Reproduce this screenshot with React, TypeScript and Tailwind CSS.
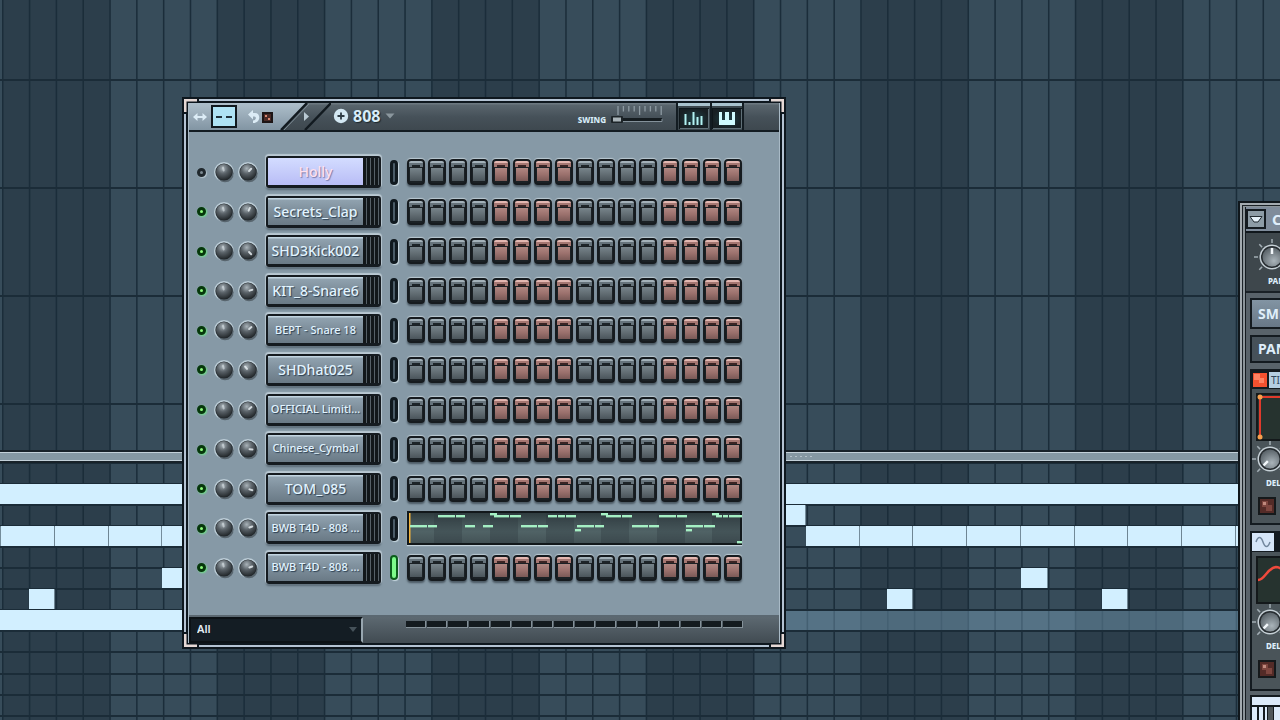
import { useState } from "react";
import clsx from "clsx";

interface Channel {
  name: string;
  muted?: boolean;
  selected?: boolean;
  small?: boolean;
  active?: boolean;
  roll?: boolean;
  vol: number;
}

const CHANNELS: Channel[] = [
  { name: "Holly", muted: true, selected: true, vol: 45 },
  { name: "Secrets_Clap", vol: 25 },
  { name: "SHD3Kick002", vol: 135 },
  { name: "KIT_8-Snare6", vol: 75 },
  { name: "BEPT - Snare 18", small: true, vol: 50 },
  { name: "SHDhat025", vol: -40 },
  { name: "OFFICIAL Limitl...", small: true, vol: 50 },
  { name: "Chinese_Cymbal", small: true, vol: 95 },
  { name: "TOM_085", vol: 105 },
  { name: "BWB T4D - 808 ...", small: true, roll: true, vol: 70 },
  { name: "BWB T4D - 808 ...", small: true, active: true, vol: 70 },
];

// x, y, width inside the mini roll
const ROLL_NOTES = [
  [3, 15, 17], [21, 15, 9], [31, 5, 17], [49, 5, 9], [58, 15, 10], [76, 15, 10],
  [83, 3, 7], [87, 5, 15], [103, 5, 11], [114, 15, 16], [131, 15, 10], [141, 5, 9],
  [151, 5, 7], [159, 5, 10], [170, 15, 17], [188, 15, 9], [168, 19, 6], [194, 3, 7],
  [199, 5, 15], [215, 5, 10], [225, 15, 16], [242, 15, 10], [252, 5, 17], [270, 5, 10],
  [279, 15, 17], [297, 15, 11], [279, 19, 6], [305, 3, 7], [309, 5, 6], [316, 5, 5],
  [322, 5, 13], [330, 31, 5],
];

const BEAT = 26.82;
const ROW = 21.1;
const BEATS = Array.from({ length: 96 }, (_, i) => i);

// x, row, width
const NOTES = [
  [0, 1, 2400],
  [760, 2, 46],
  [-53, 3, 54], [1, 3, 54], [55, 3, 54], [109, 3, 53], [162, 3, 53],
  [806, 3, 54], [860, 3, 53], [913, 3, 54], [967, 3, 54], [1021, 3, 54],
  [1075, 3, 53], [1128, 3, 54], [1182, 3, 54], [1236, 3, 54],
  [162, 5, 27], [1021, 5, 27],
  [29, 6, 26], [887, 6, 26], [1102, 6, 26],
  [0, 7, 300],
];

function Beats() {
  return (
    <>
      <rect width="100%" height="100%" fill="#374c5a" />
      {BEATS.filter((i) => i % 8 === 0).map((i) => (
        <rect key={i} x={3 + i * BEAT} width={4 * BEAT} height="100%" fill="#2c3e4b" />
      ))}
      {BEATS.map((i) => (
        <rect key={i} x={2 + i * BEAT} width="1.5" height="100%" fill="#1b2d3a" />
      ))}
    </>
  );
}

function PianoRoll() {
  return (
    <div className="flex h-full flex-col">
      <svg className="h-[450px] w-full shrink-0" aria-hidden="true">
        <Beats />
        {[79, 187, 295, 403].map((y) => (
          <rect key={y} y={y} width="100%" height="2" fill="#1b2c38" />
        ))}
      </svg>
      <div className="flex h-[13px] shrink-0 items-center border-y-2 border-[#182229] bg-[#8598a3] shadow-[inset_0_1px_0_#c3d0d8,inset_0_-1px_0_#c3d0d8]">
        <svg className="ml-[790px] h-[3px] w-[26px]" aria-hidden="true">
          {[0, 5, 10, 15, 20].map((x) => (
            <rect key={x} x={x} y="1" width="2" height="1" fill="#b4c1c9" />
          ))}
        </svg>
      </div>
      <svg className="min-h-0 w-full flex-1" aria-hidden="true">
        <Beats />
        <rect y={7 * ROW - 1} width="100%" height={ROW} fill="#7ea6c0" fillOpacity="0.42" />
        {BEATS.slice(0, 60).map((i) => (
          <rect key={i} y={Math.floor(i * ROW) - 1} width="100%" height="2" fill="#1b2c38" />
        ))}
        {NOTES.map(([x, row, w], i) => (
          <rect key={i} x={x} y={Math.floor(row * ROW)} width={w - 0.6} height="20" fill="#d2efff" />
        ))}
      </svg>
    </div>
  );
}

function Knob({ label, angle, soft }: { label: string; angle: number; soft?: boolean }) {
  return (
    <label className="relative block size-[18px]">
      <input type="range" aria-label={label} className="absolute inset-0 size-full opacity-0" />
      <svg viewBox="0 0 18 18" className="pointer-events-none relative size-full overflow-visible">
        <circle cx="9" cy="9" r="10" fill="#bccdd7" />
        <circle cx="10" cy="10.5" r="8.8" fill="#58656e" />
        <circle cx="9" cy="9" r="8.6" fill="#22282c" />
        <circle cx="9" cy="9" r="8" fill="url(#knob)" />
        <line
          x1="9"
          y1="7.5"
          x2="9"
          y2="4.5"
          stroke="#e6edf1"
          strokeWidth="2"
          strokeOpacity={soft ? 0.5 : 0.85}
          strokeLinecap="round"
          transform={`rotate(${angle} 9 9)`}
        />
      </svg>
    </label>
  );
}

// face, cap notch and cap are stacked over the dark body of the key
const STEP =
  "h-[26px] w-[18px] appearance-none rounded-[4px] border-2 border-[#161b1f] bg-[#1b2125] bg-no-repeat shadow-[0_-1px_1px_#bccad3,0_2px_2px_#4b5963] bg-size-[12px_13px,8px_2px,14px_6px] bg-position-[1px_7px,3px_4px,0_0]";
const STEP_GREY =
  "bg-[image:linear-gradient(#77848b,#626d73_50%,#4b555b),linear-gradient(#1d2428,#1d2428),linear-gradient(#a3b1b9_0_2px,#66737b_2px)]";
const STEP_RED =
  "bg-[image:linear-gradient(#b08782,#9b716d_50%,#7b5a57),linear-gradient(#3a2424,#3a2424),linear-gradient(#e3b7b1_0_2px,#a57772_2px)]";

function Steps({ name }: { name: string }) {
  return (
    <div className="flex w-[335px] justify-between">
      {Array.from({ length: 16 }, (_, i) => (
        <input
          key={i}
          type="checkbox"
          aria-label={`${name} ${i + 1}`}
          className={clsx(STEP, Math.floor(i / 4) % 2 ? STEP_RED : STEP_GREY)}
        />
      ))}
    </div>
  );
}

function MiniRoll() {
  return (
    <button type="button" aria-label="Piano roll" className="shadow-[0_1px_1px_#c3d2db]">
      <svg viewBox="0 0 335 34" className="h-[34px] w-[335px]">
        <rect width="335" height="34" fill="#4a5a5e" />
        <rect width="335" height="34" fill="url(#roll)" />
        {[27, 83, 139, 194, 250, 305].map((x) => (
          <rect key={x} x={x} width="28" height="34" fill="#2a363a" fillOpacity="0.3" />
        ))}
        <rect x="1" y="1" width="333" height="32" fill="none" stroke="#12181b" strokeWidth="2" />
        <rect x="2" y="2" width="1.5" height="30" fill="#f3b43c" />
        {ROLL_NOTES.map(([x, y, w], i) => (
          <rect key={i} x={x} y={y - 1} width={w} height="2.4" fill="#a5f0c4" />
        ))}
      </svg>
    </button>
  );
}

function ChannelRow({ channel }: { channel: Channel }) {
  const [on, setOn] = useState(!channel.muted);
  return (
    <div className="flex h-[34px] items-center gap-[9px]">
      <input
        type="checkbox"
        checked={on}
        onChange={() => setOn(!on)}
        aria-label={`${channel.name} on`}
        className="size-[9px] appearance-none rounded-full border-[3px] border-[#20282d] bg-[#7d8a92] shadow-[1px_1px_1px_#b5c5cf] checked:border-[#06370b] checked:bg-[#8dfb7c] checked:shadow-[1px_1px_2px_#6fe08a]"
      />
      <div className="flex gap-1.5">
        <Knob label={`${channel.name} pan`} angle={-12} soft />
        <Knob label={`${channel.name} volume`} angle={channel.vol} />
      </div>
      <button
        type="button"
        className="flex h-8 w-[115px] rounded-[3px] border-2 border-b-3 border-[#151b20] bg-[#151b20] shadow-[0_-1px_1px_1px_#b9c8d2,0_2px_2px_#596974]"
      >
        <span
          className={clsx(
            "flex h-full w-[95px] items-center justify-center overflow-hidden font-medium whitespace-nowrap",
            channel.small ? "text-[11px]" : "text-[14px]",
            channel.selected
              ? "bg-[linear-gradient(#d3dcff,#b9bdf6)] text-[#ffe0ee] [text-shadow:1px_1px_1px_#7b7ba8]"
              : "bg-[linear-gradient(#c2d5e1_0_1px,#90a2af_2px,#7f909d_12px,#6a7a86)] text-[#e2f4ff] [text-shadow:1px_1px_1px_#2b3f52]",
          )}
        >
          {channel.name}
        </span>
        <span className="h-full flex-1 bg-[repeating-linear-gradient(90deg,#12171a_0_3px,#566067_3px_4px)]" />
      </button>
      <button
        type="button"
        aria-label={`Select ${channel.name}`}
        className={clsx(
          "h-[25px] w-2 rounded-full shadow-[1px_1px_1px_#c9d8e1]",
          channel.active ? "border-2 border-[#0b5c1c] bg-[#7dfa8b]" : "border-3 border-[#10191f] bg-[#4a5b67]",
        )}
      />
      {channel.roll ? <MiniRoll /> : <Steps name={channel.name} />}
    </div>
  );
}

function Toolbar() {
  return (
    <header className="flex h-[29px] border-b-2 border-[#131c22] bg-[linear-gradient(#6c7880_0_1px,#59656d_2px,#465159_14px,#3e484f)] text-[#d7ecf8]">
      <div className="relative flex w-[140px] shrink-0 items-center">
        <svg viewBox="0 0 142 27" className="absolute inset-0 h-[27px] w-[142px]" aria-hidden="true">
          <path d="M0 0H118L92 27H0Z" fill="url(#tool)" />
          <path d="M118 0L92 27M142 0L116 27" stroke="#121a20" strokeWidth="2.4" />
          <path d="M120 1L95 27" stroke="#7d8b94" strokeWidth="1" />
          <path d="M115 9L120 13.500L115 18Z" fill="#b9c9d3" />
        </svg>
        <button type="button" aria-label="Move" className="relative ml-0.5">
          <svg viewBox="0 0 18 12" className="h-3 w-[18px]">
            <path d="M2 6L6.500 2V5H11.500V2L16 6L11.500 10V7H6.500V10Z" fill="#dcecf6" />
          </svg>
        </button>
        <button
          type="button"
          aria-label="Graph mode"
          className="relative ml-0.5 flex h-[23px] w-[26px] items-center justify-center gap-1 border-2 border-[#10191f] bg-[#aee3f5]"
        >
          <span className="h-0.5 w-[6px] bg-[#21323c]" />
          <span className="h-0.5 w-[6px] bg-[#21323c]" />
        </button>
        <button type="button" aria-label="Loop" className="relative ml-2.5 flex items-center">
          <svg viewBox="0 0 28 16" className="h-4 w-7">
            <path d="M1 5.500L6 1V4H8C14 4 14 14 6 14V11.500C9.500 11.500 9.500 7.500 7.500 7.500H6V10.500Z" fill="#dcecf6" />
            <rect x="15" y="3" width="11" height="11" fill="#1d1515" />
            <rect x="17" y="5" width="7" height="7" fill="#4a2a26" />
            <path d="M18 6h2v2h-2zM21 9h2v2h-2z" fill="#d9866f" />
          </svg>
        </button>
      </div>
      <button type="button" className="ml-1 flex items-center gap-1 pb-0.5 text-[16px] leading-6 font-bold [text-shadow:1px_1px_1px_#1c262c]">
        <svg viewBox="0 0 16 16" className="size-4" aria-hidden="true">
          <circle cx="8" cy="8" r="7.200" fill="#d3e8f3" />
          <path d="M8 4.500V11.500M4.500 8H11.500" stroke="#2e3b44" strokeWidth="1.8" />
        </svg>
        808
        <svg viewBox="0 0 12 8" className="h-2 w-3" aria-hidden="true">
          <path d="M1.500 1.500H10.500L6 6.500Z" fill="#8b979e" />
        </svg>
      </button>
      <label className="mr-3 ml-auto flex items-end gap-1 pb-1 text-[8px] leading-3 font-extrabold">
        SWING
        <span className="relative mb-px block h-5 w-[54px]">
          <svg viewBox="0 0 54 20" className="absolute inset-0 size-full" aria-hidden="true">
            {Array.from({ length: 9 }, (_, i) => (
              <path key={i} d={`M${8 + i * 5.4} 1V${i % 4 === 0 ? 10 : 6.5}`} stroke="#8d9aa2" strokeWidth="1.300" />
            ))}
            <rect x="2" y="13" width="50" height="3" fill="#151c20" />
            <path d="M3 16.500H52V14" stroke="#84919a" fill="none" />
            <rect x="1" y="11" width="12" height="7" rx="1" fill="#1d2428" />
            <rect x="3" y="12.500" width="8" height="4" fill="#a9b3b8" />
          </svg>
          <input type="range" defaultValue={0} className="absolute inset-0 size-full opacity-0" />
        </span>
      </label>
      <button type="button" aria-label="Graph editor" className="flex w-[34px] items-end justify-center border-l-2 border-[#131c22] bg-[linear-gradient(#a9c2cd_0_3px,#3b464c_3px)] pb-px">
        <svg viewBox="0 0 30 21" className="h-[21px] w-[30px]">
          <rect x="0.500" y="0.500" width="29" height="20" fill="url(#lamp)" stroke="#0f171b" />
          <path d="M1 20.500H29.500V1" stroke="#607078" fill="none" />
          <path d="M6.500 6V17M10.500 14V17M14.500 4V17M18.500 9V17M22.500 8V17" stroke="#b2f2f2" strokeWidth="2" />
        </svg>
      </button>
      <button type="button" aria-label="Keyboard editor" className="flex w-[34px] items-end justify-center border-x-2 border-[#131c22] bg-[linear-gradient(#a9c2cd_0_3px,#3b464c_3px)] pb-px">
        <svg viewBox="0 0 30 21" className="h-[21px] w-[30px]">
          <rect x="0.500" y="0.500" width="29" height="20" fill="url(#lamp)" stroke="#0f171b" />
          <path d="M1 20.500H29.500V1" stroke="#607078" fill="none" />
          <path d="M7 4H10V12H13V4H17V12H20V4H23V17H7Z" fill="#d0fbff" />
        </svg>
      </button>
      <div className="w-[35px] shrink-0" />
    </header>
  );
}

function Corner({ className }: { className: string }) {
  return (
    <svg viewBox="0 0 16 16" className={clsx("absolute size-4", className)} aria-hidden="true">
      <path d="M0 0H15V3H3V15H0Z" fill="#0e171e" />
      <path d="M0 0H13V2.500H2.500V13H0Z" fill="#e6d9d6" />
    </svg>
  );
}

function StepSequencer() {
  return (
    <section className="absolute top-[97px] left-[182px] w-[604px] border-2 border-[#0e171e] bg-[#b4c3d3] p-0.5 font-['Noto_Sans',sans-serif]">
      <div className="border-2 border-[#0e171e] bg-[#8699a6]">
        <div className="border-x border-[#a9bac6]">
          <Toolbar />
          <div className="pt-[23px] pl-2">
            <div className="flex h-[430px] flex-col justify-between">
              {CHANNELS.map((channel, i) => (
                <ChannelRow key={i} channel={channel} />
              ))}
            </div>
          </div>
          <footer className="mt-[30px] flex h-[28px] border-t-2 border-[#5b6871] bg-[linear-gradient(#5d6971,#414b52)]">
            <div className="relative w-[174px] shrink-0 border-2 border-[#0c1216] border-r-[#98a6af] bg-[#141d24]">
              <select
                aria-label="Channel group"
                className="block h-5 w-full appearance-none pl-1.5 text-[11px] leading-5 font-semibold text-[#e4eef4]"
              >
                <option>All</option>
              </select>
              <svg viewBox="0 0 8 5" className="pointer-events-none absolute top-2 right-1 h-[5px] w-2" aria-hidden="true">
                <path d="M0 0H8L4 5Z" fill="#46525a" />
              </svg>
            </div>
            <div className="mt-1 ml-[43px] flex h-[7px] w-[337px] gap-px">
              {BEATS.slice(0, 16).map((i) => (
                <span key={i} className="h-full flex-1 border-r border-b border-[#85929a] bg-[#141b1f]" />
              ))}
            </div>
          </footer>
        </div>
      </div>
      <Corner className="top-0 left-0" />
      <Corner className="top-0 right-0 rotate-90" />
      <Corner className="right-0 bottom-0 rotate-180" />
      <Corner className="bottom-0 left-0 -rotate-90" />
    </section>
  );
}

function BigKnob({ label, turn, caption }: { label: string; turn: number; caption: string }) {
  return (
    <label className="block w-12 shrink-0">
      <span className="relative block size-9">
        <input type="range" aria-label={label} className="absolute inset-0 size-full opacity-0" />
        <svg viewBox="0 0 36 36" className="pointer-events-none relative size-full">
          {[-135, -90, -45, 0, 45, 90, 135].map((a) => (
            <path key={a} d="M18 0V4" stroke="#a3aeb5" strokeWidth="1.500" transform={`rotate(${a} 18 18)`} />
          ))}
          <circle cx="18" cy="18" r="12.500" fill="#c6d0d6" />
          <circle cx="18" cy="18" r="11" fill="#262c30" />
          <circle cx="18" cy="18" r="9.500" fill="url(#dial)" />
          <path d="M18 15V9" stroke="#f2f7fa" strokeWidth="2.500" transform={`rotate(${turn} 18 18)`} />
        </svg>
      </span>
      <span className="block pl-3.5 text-[8px] leading-3 font-extrabold">{caption}</span>
    </label>
  );
}

function RedLed() {
  return (
    <svg viewBox="0 0 18 18" className="size-[18px]" aria-hidden="true">
      <rect x="1" y="1" width="16" height="16" fill="#532b27" stroke="#15191b" strokeWidth="2" />
      <path d="M4 4H10V8H14V14H8V10H4Z" fill="#7d463f" />
      <path d="M5 5H8V8H5Z" fill="#c08a7e" />
    </svg>
  );
}

function ChannelSettings() {
  return (
    <section className="absolute top-[201px] right-0 bottom-0 left-[1238px] flex flex-col overflow-hidden border-t-2 border-l-2 border-[#10171c] bg-[#a3abb0] pt-0.5 pl-0.5 font-['Noto_Sans',sans-serif] text-[#dfeefa]">
      <div className="flex min-h-0 flex-1 flex-col border-t border-l border-[#1c2328] bg-[#8c959a] pt-px pl-0.5">
        <div className="min-h-0 flex-1 overflow-hidden border-l border-[#141b20] bg-[#59636a]">
          <header className="flex h-[26px] items-center gap-1.5 border-b-2 border-[#10171c] bg-[#7f8c9b]">
            <button type="button" aria-label="Options" className="flex size-5 shrink-0 items-center justify-center border-2 border-[#141b20] bg-[#8d9ca6]">
              <svg viewBox="0 0 14 9" className="h-[9px] w-3.5">
                <path d="M1 1.500H13L9 7H5Z" fill="#e6f2fa" stroke="#222b31" />
              </svg>
            </button>
            <h2 className="text-[15px] leading-5 font-bold">C</h2>
          </header>
          <div className="h-[60px] overflow-hidden border-b-2 border-[#1a2126] bg-[#3e474c] pt-1.5 pl-2">
            <BigKnob label="Pan" caption="PAN" turn={0} />
          </div>
          <div className="mt-[5px] flex flex-col gap-1.5 pl-1 text-[14px] font-bold">
            <button type="button" className="h-[31px] border-2 border-r-0 border-[#141b20] bg-[linear-gradient(#8294a3,#687887)] pl-1.5 text-left">
              SMP
            </button>
            <button type="button" className="h-7 border-2 border-r-0 border-[#141b20] bg-[#465159] pl-1.5 text-left leading-5">
              PAN
            </button>
          </div>
          <div className="mt-1.5 ml-1 h-[156px] overflow-hidden border-2 border-r-0 border-[#141b20] bg-[#4a5459]">
            <div className="flex h-[18px] items-center bg-[#141b20] text-[10px]">
              <svg viewBox="0 0 16 16" className="size-4 shrink-0" aria-hidden="true">
                <rect x="1" y="1" width="14" height="14" fill="#f5512f" />
                <path d="M2 2H8V6H12V11H7V8H2Z" fill="#ff8262" />
              </svg>
              <span className="ml-px h-4 flex-1 overflow-hidden bg-[#b5cfe2] pl-0.5 leading-4 text-[#30465a]">TI</span>
            </div>
            <svg viewBox="0 0 32 48" className="mt-1 ml-1 h-12 w-8" aria-hidden="true">
              <rect width="40" height="48" fill="#14191b" />
              <rect x="2" y="2" width="38" height="44" fill="#26332f" />
              <path d="M32 4H4V44" fill="none" stroke="#e03a2c" strokeWidth="2" />
              <circle cx="4" cy="4" r="2.500" fill="#f5a04d" />
              <circle cx="4" cy="44" r="2.500" fill="#f5a04d" />
            </svg>
            <BigKnob label="Delay" caption="DEL" turn={-135} />
            <button type="button" aria-label="Tempo" className="mt-2 ml-1.5 block">
              <RedLed />
            </button>
          </div>
          <div className="mt-1.5 ml-1 h-[160px] overflow-hidden border-2 border-r-0 border-[#141b20] bg-[#4a5459]">
            <div className="flex h-[19px] bg-[#141b20]">
              <svg viewBox="0 0 22 18" className="h-[18px] w-[22px] shrink-0 bg-[#d6e6f8]" aria-hidden="true">
                <path d="M4 9C6 3 9 3 11 9S16 15 18 9" fill="none" stroke="#73889e" strokeWidth="1.500" />
              </svg>
            </div>
            <svg viewBox="0 0 32 48" className="mt-1 ml-1 h-12 w-8" aria-hidden="true">
              <rect width="40" height="48" fill="#14191b" />
              <rect x="2" y="2" width="38" height="44" fill="#26332f" />
              <path d="M2 24C9 24 11 12 20 11C25 11 27 14 32 18" fill="none" stroke="#ef4a3c" strokeWidth="2.500" />
            </svg>
            <BigKnob label="LFO delay" caption="DEL" turn={-135} />
            <button type="button" aria-label="Global" className="mt-2 ml-1.5 block">
              <RedLed />
            </button>
          </div>
          <svg viewBox="0 0 34 32" className="mt-1 ml-1 h-8 w-[34px]" aria-hidden="true">
            <rect width="34" height="32" fill="#141b20" />
            <rect x="2" y="2" width="32" height="8" fill="#dcebfb" />
            <path d="M2 12H7V32H2ZM9 12H13V32H9ZM15 12H17V32H15ZM24 12H34V32H24Z" fill="#dcebfb" />
            <rect x="18" y="12" width="5" height="20" fill="#50585c" />
          </svg>
        </div>
      </div>
    </section>
  );
}

function Gradients() {
  return (
    <svg className="absolute size-0" aria-hidden="true">
      <defs>
        <radialGradient id="knob" cx="0.42" cy="0.28" r="0.75">
          <stop offset="0" stopColor="#a9b3b9" />
          <stop offset="0.45" stopColor="#596167" />
          <stop offset="1" stopColor="#202528" />
        </radialGradient>
        <radialGradient id="dial" cx="0.6" cy="0.7" r="0.8">
          <stop offset="0" stopColor="#aab4ba" />
          <stop offset="1" stopColor="#4f585e" />
        </radialGradient>
        <radialGradient id="lamp">
          <stop offset="0" stopColor="#1f4247" />
          <stop offset="1" stopColor="#182024" />
        </radialGradient>
        <linearGradient id="tool" x2="0" y2="1">
          <stop offset="0" stopColor="#aebfcb" />
          <stop offset="1" stopColor="#8295a3" />
        </linearGradient>
        <linearGradient id="roll" x2="0" y2="1">
          <stop offset="0" stopColor="#1c2629" stopOpacity="0.7" />
          <stop offset="0.6" stopColor="#566b6d" stopOpacity="0.5" />
          <stop offset="1" stopColor="#3a474a" stopOpacity="0.6" />
        </linearGradient>
      </defs>
    </svg>
  );
}

export default function App() {
  return (
    <main className="relative h-screen overflow-hidden bg-[#374c5a]">
      <Gradients />
      <PianoRoll />
      <StepSequencer />
      <ChannelSettings />
    </main>
  );
}
